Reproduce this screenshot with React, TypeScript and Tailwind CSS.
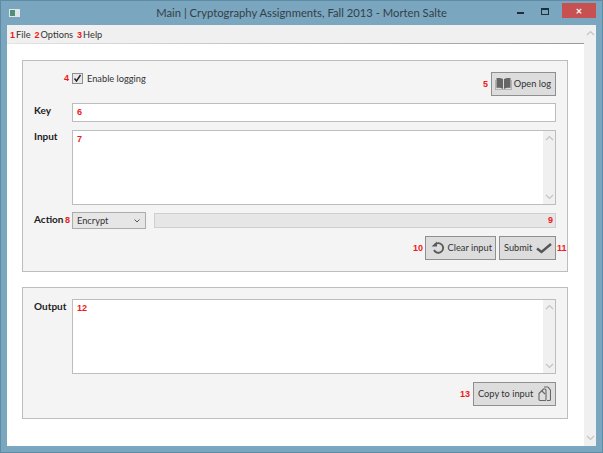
import React, { FC, ReactNode } from "react";

const Num: FC<{ children: ReactNode; className?: string }> = ({ children, className }) => (
  <span className={`font-['Liberation_Sans',sans-serif] text-[9px] font-bold leading-none text-[#f01818] ${className ?? ""}`}>{children}</span>
);

const Btn: FC<{ children: ReactNode; className?: string }> = ({ children, className }) => (
  <button className={`flex h-6 items-center justify-between whitespace-nowrap border border-[#8f8f8f] bg-[#dddddd] text-[#333] ${className ?? ""}`}>
    {children}
  </button>
);

const Chevron: FC<{ up?: boolean }> = ({ up }) => (
  <svg width="9" height="6" viewBox="0 0 9 6" fill="none" stroke="#c4c4c4" strokeWidth="1.2">
    <path d={up ? "M1 5l3.5-3.5L8 5" : "M1 1l3.5 3.5L8 1"} />
  </svg>
);

const TextArea: FC<{ num: string }> = ({ num }) => (
  <div className="relative flex h-[75px] flex-1 border border-[#bdbdbd] bg-white">
    <Num className="absolute left-[4px] top-[4px]">{num}</Num>
    <div className="ml-auto flex w-[12px] flex-col items-center justify-between bg-[#f0f0f0] py-[4px]">
      <Chevron up />
      <Chevron />
    </div>
  </div>
);

const App: FC = () => {
  return (
    <div className="flex h-[453px] w-[603px] flex-col bg-white font-['Lato',sans-serif] text-[9.25px]">
      <div className="flex h-full flex-col border border-[#5f8ba5] bg-[#7aa6bf] px-[6px] pb-[6px]">
        {/* title bar */}
        <div className="relative flex h-[24px] shrink-0 items-center justify-center text-[11.25px] text-[#333f47]">
          <div className="absolute left-[2px] top-[8px] flex h-[8px] w-[11px] bg-[#dfe6e8]">
            <div className="m-[1px] w-[5px] bg-[#4f8f78]" />
          </div>
          <span>Main | Cryptography Assignments, Fall 2013 - Morten Salte</span>
          <div className="absolute right-0 top-[2px] flex items-start">
            <div className="mr-[17px] mt-[9px] h-[2px] w-[7px] bg-[#1f2f3a]" />
            <div className="mr-[13px] mt-[5px] h-[7px] w-[8px] border border-t-2 border-[#1f2f3a]" />
            <div className="flex h-[15px] w-[34px] items-center justify-center bg-[#c75050] text-[11px] font-bold leading-none text-white">×</div>
          </div>
        </div>

        <div className="flex min-h-0 flex-1 bg-[#f0f0f0]">
          <div className="flex min-w-0 flex-1 flex-col">
            {/* menu */}
            <div className="flex h-[18px] shrink-0 items-center gap-[4px] pl-[3px] pt-[2px] text-[#333]">
              <span className="flex items-center gap-[1px]"><Num>1</Num>File</span>
              <span className="flex items-center gap-[1px]"><Num>2</Num>Options</span>
              <span className="flex items-center gap-[1px]"><Num>3</Num>Help</span>
            </div>
            <div className="h-px shrink-0 bg-linear-to-r from-[#e4e4e4] to-[#999999]" />

            <div className="flex flex-1 flex-col gap-[15px] bg-white pl-[15px] pr-[16px] pt-[16px]">
              {/* input panel */}
              <section className="flex h-[212px] flex-col border border-[#bdbdbd] bg-[#f4f4f4] pl-[11px] pr-[11px] pt-[11px] text-[#333]">
                <div className="flex h-[25px] items-start pl-[30px]">
                  <Num className="mt-[2px] w-[5px]">4</Num>
                  <div className="ml-[3px] mt-[1px] flex size-[11px] items-center justify-center border border-[#8f8f8f] bg-[#e8e8e8]">
                    <svg width="9" height="9" viewBox="0 0 9 9" fill="none" stroke="#222" strokeWidth="1.4"><path d="M1.500 4.500l2 2.500L7.500 1" /></svg>
                  </div>
                  <span className="ml-[4px] leading-[13px]">Enable logging</span>
                  <div className="ml-auto flex items-center gap-[3px]">
                    <Num>5</Num>
                    <Btn className="w-[65px] pl-[3px] pr-[4px]">
                      <svg width="17" height="12" viewBox="0 0 17 12"><path d="M1.500 0c2.200-.4 5 0 6.500 1v10c-1.500-1-4.300-1.400-6.500-1zM15.500 0c-2.200-.4-5 0-6.500 1v10c1.500-1 4.300-1.400 6.500-1z" fill="#666666" /><path d="M0 2h.8v9.200H16.200V2h.8v10H0z" fill="#a8a8a8" /></svg>
                      <span>Open log</span>
                    </Btn>
                  </div>
                </div>

                <div className="mt-[6px] flex">
                  <span className="w-[38px] text-[10px] font-bold leading-[14px] text-[#1c1c1c]">Key</span>
                  <div className="flex h-[19px] flex-1 items-center border border-[#bdbdbd] bg-white pl-[4px]"><Num>6</Num></div>
                </div>

                <div className="mt-[8px] flex">
                  <span className="w-[38px] text-[10px] font-bold leading-[12px] text-[#1c1c1c]">Input</span>
                  <TextArea num="7" />
                </div>

                <div className="mt-[7px] flex items-center">
                  <span className="w-[30px] pb-[3px] text-[10px] font-bold leading-[14px] text-[#1c1c1c]">Action</span>
                  <Num className="w-[8px] pl-[1px]">8</Num>
                  <div className="flex h-[17px] w-[74px] items-center justify-between border border-[#acacac] bg-[#e6e6e6] pl-[4px] pr-[5px]">
                    Encrypt
                    <svg width="6" height="4" viewBox="0 0 6 4" fill="none" stroke="#555"><path d="M.5.500l2.500 2.500L5.500.500" /></svg>
                  </div>
                  <div className="ml-[8px] flex h-[15px] flex-1 items-center justify-end border border-[#cfcfcf] bg-[#e6e6e6] pr-[2px]">
                    <Num>9</Num>
                  </div>
                </div>

                <div className="mt-[7px] flex items-center justify-end">
                  <Num className="mr-[2px]">10</Num>
                  <Btn className="w-[71px] pl-[5px] pr-[3px]">
                    <svg width="14" height="14" viewBox="0 0 14 14" fill="none" stroke="#5a5a5a" strokeWidth="1.8"><path d="M4 3.500a4.800 4.800 0 1 1-1 5.500" /><path d="M.5 5.500H6V.5z" fill="#5a5a5a" stroke="none" /></svg>
                    Clear input
                  </Btn>
                  <Btn className="ml-[3px] w-[57px] pl-[4px] pr-[3px]">
                    Submit
                    <svg width="16" height="12" viewBox="0 0 16 12" fill="none" stroke="#555" strokeWidth="2.400"><path d="M1 6.500l4.500 3.500L15 2" /></svg>
                  </Btn>
                  <Num className="-mr-[9px] ml-[1px] w-[8px]">11</Num>
                </div>
              </section>

              {/* output panel */}
              <section className="flex h-[132px] flex-col border border-[#bdbdbd] bg-[#f4f4f4] pl-[11px] pr-[11px] pt-[11px] text-[#333]">
                <div className="flex">
                  <span className="w-[38px] text-[10px] font-bold leading-[14px] text-[#1c1c1c]">Output</span>
                  <TextArea num="12" />
                </div>
                <div className="mt-[8px] flex items-center justify-end gap-[3px]">
                  <Num>13</Num>
                  <Btn className="w-[83px] pl-[4px] pr-[4px]">
                    Copy to input
                    <svg width="13" height="16" viewBox="0 0 13 16" fill="none" stroke="#666" strokeWidth="1.100" strokeLinejoin="round"><path d="M6 1h3.500a1 1 0 0 1 .8.400l2 2.400a1 1 0 0 1 .2.700v9a1 1 0 0 1-1 1H9" /><path d="M1 7.500L5.500 3h1.500a1 1 0 0 1 1 1v9.500a1 1 0 0 1-1 1H2a1 1 0 0 1-1-1z" /><path d="M4 5l3 3" /></svg>
                  </Btn>
                </div>
              </section>
            </div>
          </div>

          {/* scrollbar */}
          <div className="flex w-[12px] shrink-0 flex-col items-center justify-between py-[5px]">
            <Chevron up />
            <Chevron />
          </div>
        </div>
      </div>
    </div>
  );
};

export default App;
